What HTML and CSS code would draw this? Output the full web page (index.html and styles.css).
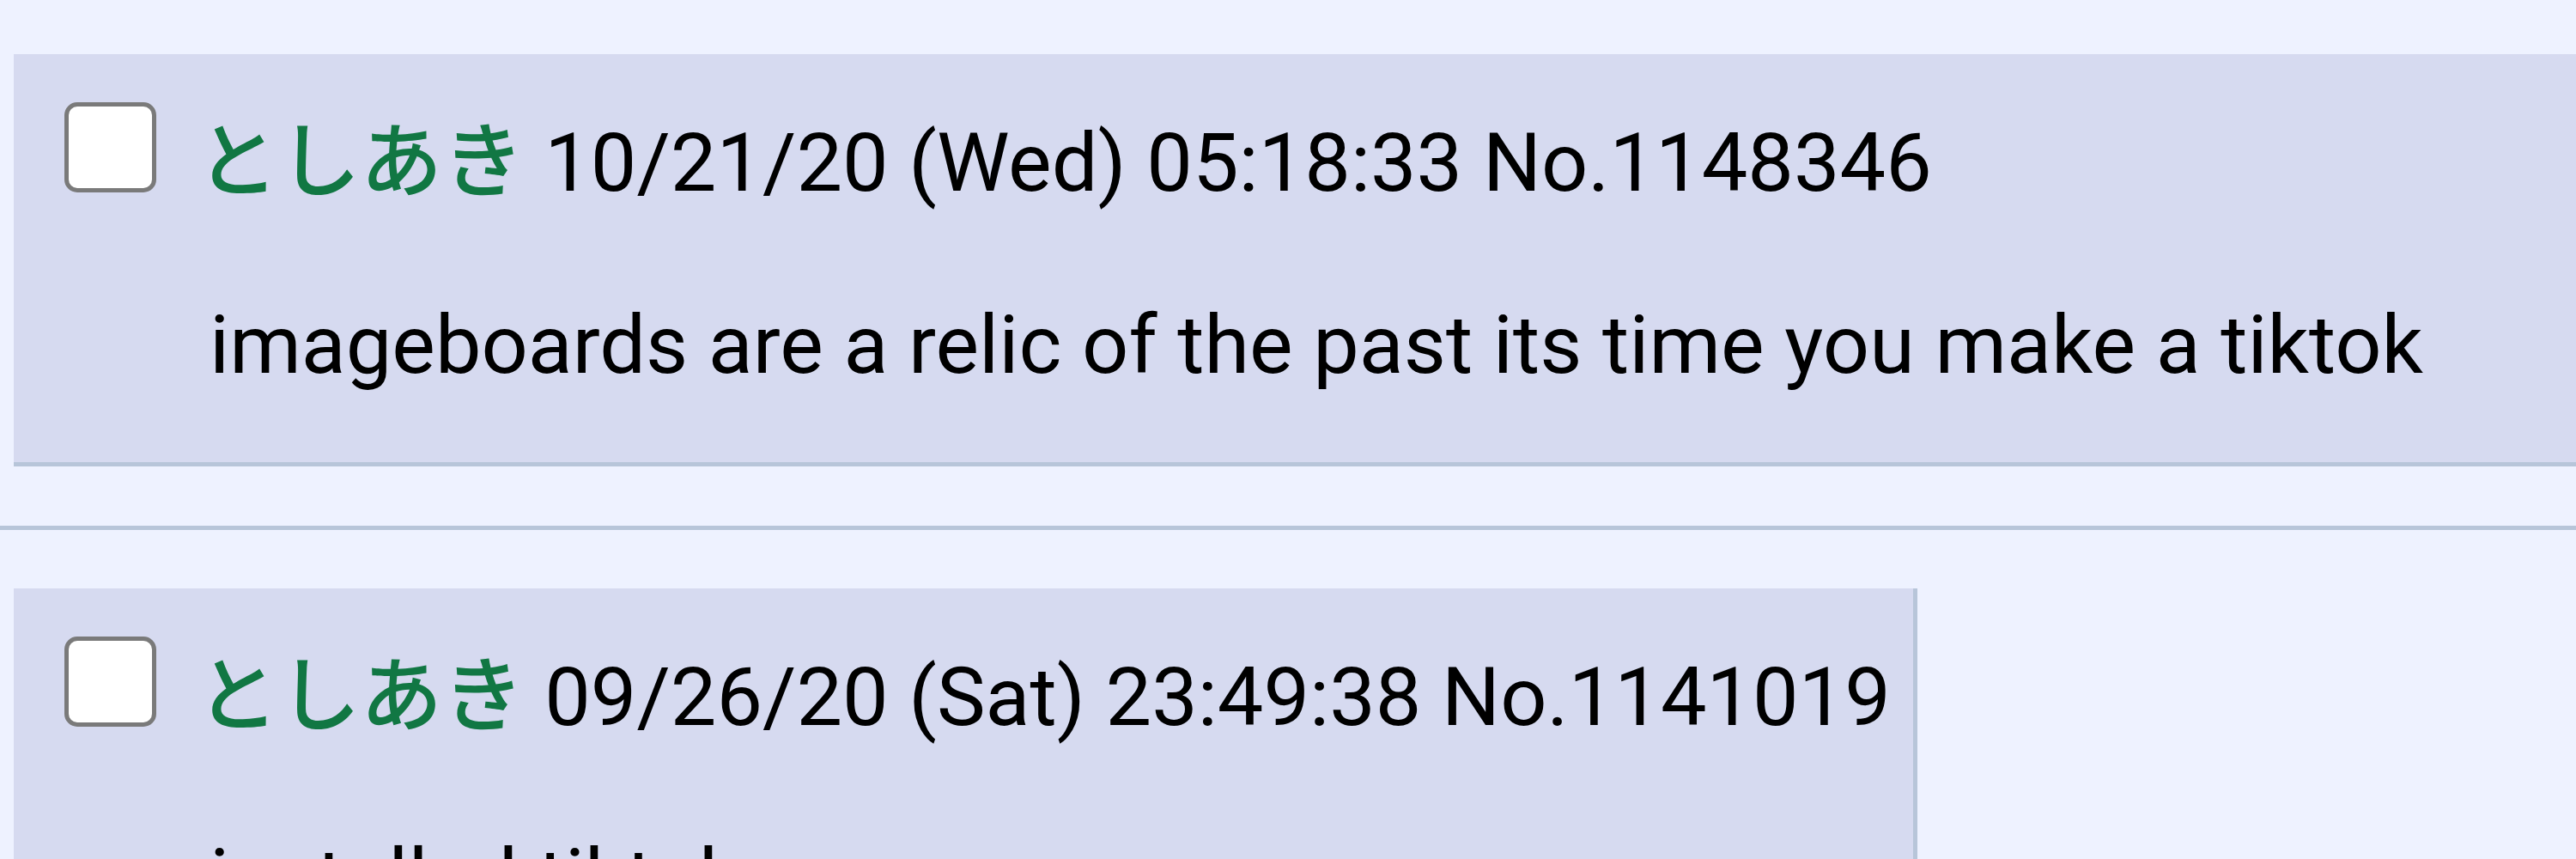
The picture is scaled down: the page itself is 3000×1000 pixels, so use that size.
FILE: index.html
```html
<!DOCTYPE html>
<html lang="en">
<head>
<meta charset="utf-8">
<title>Thread</title>
<link rel="stylesheet" href="styles.css">
</head>
<body>
<div class="thread">
  <div class="postContainer">
    <div class="post reply reply-wide">
      <div class="postInfo"><input type="checkbox" class="postCheck" aria-label="Select post 1148346"><span class="name">としあき</span> <span class="dateTime">10/21/20 (Wed) 05:18:33</span> <span class="postNum">No.1148346</span></div>
      <blockquote class="postMessage">imageboards are a relic of the past its time you make a tiktok</blockquote>
    </div>
  </div>
  <hr class="divider">
  <div class="postContainer">
    <div class="post reply">
      <div class="postInfo"><input type="checkbox" class="postCheck" aria-label="Select post 1141019"><span class="name">としあき</span> <span class="dateTime">09/26/20 (Sat) 23:49:38</span> <span class="postNum">No.1141019</span></div>
      <blockquote class="postMessage">installed tiktok</blockquote>
    </div>
  </div>
</div>
</body>
</html>
```
FILE: styles.css
```css
html {
  overflow: hidden;
  background: #eef2ff;
}

body {
  margin: 0;
  background: #eef2ff;
  color: #000;
  font-family: Roboto, "Noto Sans CJK JP", sans-serif;
  font-size: 95.4px;
  line-height: 1.172;
}

.thread {
  padding-top: 63px;
}

.postContainer {
  padding-left: 16px;
}

.post.reply {
  display: table;
  background: #d6daf0;
  border-right: 5px solid #b7c5d9;
  border-bottom: 5px solid #b7c5d9;
  padding: 0 26px 0 0;
}

/* first reply runs past the right edge of the window */
.post.reply-wide {
  display: block;
  margin-right: -40px;
}

.postInfo {
  padding: 56px 0 0 59px;
  white-space: nowrap;
}

.postCheck {
  appearance: none;
  -webkit-appearance: none;
  display: inline-block;
  box-sizing: border-box;
  width: 107px;
  height: 105px;
  margin: 0 47px -2px 0;
  border: 5px solid #7a7a7a;
  border-radius: 15px;
  background: #fff;
  vertical-align: baseline;
}

.name {
  color: #117743;
  font-family: "Noto Sans CJK JP", Roboto, sans-serif;
  font-weight: 500;
  line-height: 1;
}

.postMessage {
  margin: 100px 0 80px 228px;
}

.divider {
  height: 0;
  margin: 69px 0 68px;
  border: 0;
  border-top: 5px solid #b7c5d9;
}
```
